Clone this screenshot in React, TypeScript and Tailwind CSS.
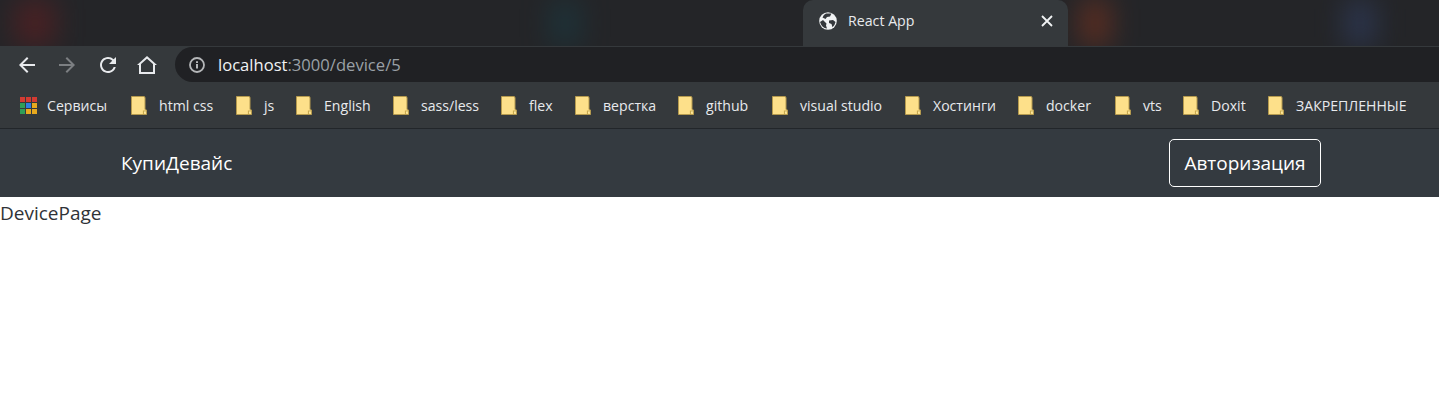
const bookmarks = [
  { label: 'html css', width: 'w-[105px]' },
  { label: 'js', width: 'w-[60px]' },
  { label: 'English', width: 'w-[97px]' },
  { label: 'sass/less', width: 'w-[108px]' },
  { label: 'flex', width: 'w-[74px]' },
  { label: 'верстка', width: 'w-[103px]' },
  { label: 'github', width: 'w-[94px]' },
  { label: 'visual studio', width: 'w-[133px]' },
  { label: 'Хостинги', width: 'w-[113px]' },
  { label: 'docker', width: 'w-[97px]' },
  { label: 'vts', width: 'w-[68px]' },
  { label: 'Doxit', width: 'w-[85px]' },
  { label: 'ЗАКРЕПЛЕННЫЕ', width: 'w-[160px]' },
];

function FolderIcon() {
  return (
    <svg width="16" height="19" viewBox="0 0 16 19" className="shrink-0">
      <path d="M0.5 0.5 H13 Q14 0.5 14 2 V13.5 L15.5 14 V18.5 H0.5 Z" fill="#fde08a" stroke="#b59a4e" strokeWidth="1" />
      <path d="M12.5 18 V15 H15" fill="#fff3b8" stroke="#c9a94f" strokeWidth="1.2" />
    </svg>
  );
}

function AppsIcon() {
  const colors = ['#d33b32', '#d33b32', '#d33b32', '#2f9e57', '#2f7fe0', '#e8a91e', '#2f9e57', '#e8a91e', '#e8a91e'];
  return (
    <div className="grid grid-cols-3 gap-[1px] w-[17px] h-[17px]">
      {colors.map((c, i) => (
        <svg key={i} width="5" height="5" viewBox="0 0 5 5">
          <rect width="5" height="5" fill={c} />
        </svg>
      ))}
    </div>
  );
}

function GlobeIcon() {
  return (
    <svg width="18" height="18" viewBox="0 0 18 18" className="shrink-0">
      <circle cx="9" cy="9" r="8.8" fill="#f1f3f4" />
      <path d="M1 10 L4 8 L7.5 11.5 L7 13.5 L8 16.5 Q3 16 1 10Z M7 1.5 L12.5 1.5 L11 4.5 L8 5 L6.5 7 L3.5 5.5 Q4.5 2.5 7 1.5Z M10 8.5 L14 8 L16.5 10 Q16 13 13.5 15.2 L12.5 12 L10 11Z" fill="#34383c" />
    </svg>
  );
}

function ToolIcon({ d, color }: { d: string; color: string }) {
  return (
    <svg width="24" height="24" viewBox="0 0 24 24" className="shrink-0">
      <path d={d} fill={color} />
    </svg>
  );
}

export default function App() {
  return (
    <div className="h-[416px] bg-white overflow-hidden font-['Open_Sans','Noto_Sans',sans-serif]">
      {/* tab strip, other tabs blurred */}
      <div className="relative h-[46px] flex bg-[#242528] overflow-hidden">
        <div className="absolute left-[15px] top-0 w-[40px] h-[46px] bg-[#5a1f22] blur-[14px] opacity-70" />
        <div className="absolute left-[550px] top-0 w-[30px] h-[46px] bg-[#17404a] blur-[14px] opacity-50" />
        <div className="absolute left-[1080px] top-0 w-[30px] h-[46px] bg-[#6b3020] blur-[14px] opacity-80" />
        <div className="absolute left-[1345px] top-0 w-[30px] h-[46px] bg-[#2e3a58] blur-[14px] opacity-80" />
        <div className="relative ml-[803px] w-[265px] h-[46px] bg-[#35393c] rounded-t-[10px] flex items-center pl-[16px] pr-[15px] pb-[5px]">
          <GlobeIcon />
          <span className="ml-[11px] text-[14.2px] text-[#e8eaed]">React App</span>
          <svg width="12" height="12" viewBox="0 0 12 12" className="ml-auto">
            <path d="M1 1 L11 11 M11 1 L1 11" stroke="#f1f3f4" strokeWidth="1.8" />
          </svg>
        </div>
      </div>

      {/* toolbar */}
      <div className="h-[37px] bg-[#35393c] flex items-center pl-[15px]">
        <ToolIcon color="#e8eaed" d="M20 11H7.83l5.59-5.59L12 4l-8 8 8 8 1.41-1.41L7.83 13H20v-2z" />
        <div className="ml-[16px]">
          <ToolIcon color="#7c7f82" d="M4 11h12.17l-5.59-5.59L12 4l8 8-8 8-1.41-1.41L16.17 13H4v-2z" />
        </div>
        <div className="ml-[17px]">
          <ToolIcon color="#e8eaed" d="M17.65 6.35A7.958 7.958 0 0012 4c-4.42 0-7.99 3.58-7.99 8s3.57 8 7.99 8c3.73 0 6.84-2.55 7.73-6h-2.08A5.99 5.99 0 0112 18c-3.31 0-6-2.69-6-6s2.69-6 6-6c1.66 0 3.14.69 4.22 1.78L13 11h7V4l-2.35 2.35z" />
        </div>
        <div className="ml-[15px]">
          <ToolIcon color="#e8eaed" d="M12 5.7l6 5.4V19H6v-7.9l6-5.4M12 3L2 12h2v9h16v-9h2L12 3z" />
        </div>
        <div className="ml-[16px] flex-1 h-[35px] bg-[#202124] rounded-l-full flex items-center pl-[14px]">
          <svg width="16" height="16" viewBox="0 0 16 16" className="shrink-0">
            <circle cx="8" cy="8" r="7" fill="none" stroke="#b5b7b9" strokeWidth="1.8" />
            <path d="M8 7v4.5M8 4.2v1.8" stroke="#b5b7b9" strokeWidth="2" />
          </svg>
          <span className="ml-[13px] pt-[2px] text-[16.6px] text-[#f1f3f4]">
            localhost<span className="text-[#9aa0a6]">:3000/device/5</span>
          </span>
        </div>
      </div>

      {/* bookmarks */}
      <div className="h-[45px] bg-[#35393c] flex items-center pl-[20px] text-[14.1px] text-[#e8eaed] whitespace-nowrap">
        <div className="w-[111px] flex items-center">
          <AppsIcon />
          <span className="ml-[10px]">Сервисы</span>
        </div>
        {bookmarks.map((b) => (
          <div key={b.label} className={`${b.width} flex items-center gap-[12px] shrink-0`}>
            <FolderIcon />
            <span>{b.label}</span>
          </div>
        ))}
      </div>

      {/* navbar */}
      <nav className="h-[69px] bg-[#343a40] border-t border-[#22262a] flex items-center justify-between pl-[121px] pr-[118px]">
        <a className="pt-[1px] text-[19px] text-white">КупиДевайс</a>
        <button className="w-[152px] h-[48px] pt-[1px] rounded-[5px] border border-white bg-transparent text-[19px] text-white">
          Авторизация
        </button>
      </nav>

      <div className="text-[19px] leading-[32px] text-[#2f3337]">DevicePage</div>
    </div>
  );
}
